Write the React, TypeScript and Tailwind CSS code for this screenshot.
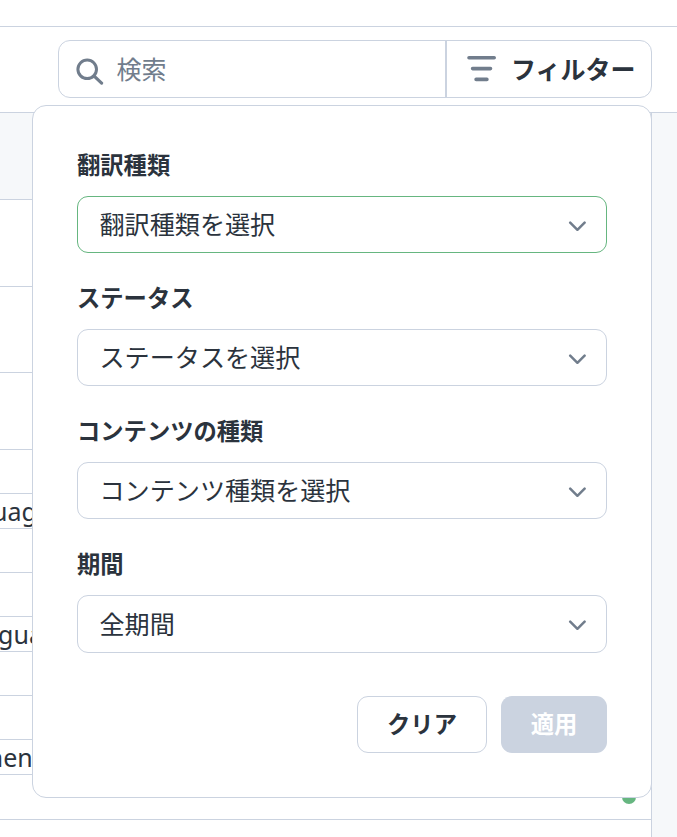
import { useState } from "react";
import clsx from "clsx";

const fields = [
  { id: "translation", label: "翻訳種類", value: "翻訳種類を選択" },
  { id: "status", label: "ステータス", value: "ステータスを選択" },
  { id: "content", label: "コンテンツの種類", value: "コンテンツ種類を選択" },
  { id: "period", label: "期間", value: "全期間" },
];

const rows = [
  { height: "h-[87px]", text: "", offset: "" },
  { height: "h-[86px]", text: "", offset: "" },
  { height: "h-[77px]", text: "", offset: "" },
  { height: "h-11", text: "", offset: "" },
  { height: "h-[35px]", text: "Language", offset: "-ml-[66px]" },
  { height: "h-11", text: "", offset: "" },
  { height: "h-11", text: "", offset: "" },
  { height: "h-[35px]", text: "Language", offset: "-ml-[44.5px]" },
  { height: "h-11", text: "", offset: "" },
  { height: "h-11", text: "", offset: "" },
  { height: "h-[35px]", text: "Document", offset: "-ml-[81px]" },
];

function SearchIcon() {
  return (
    <svg className="size-7 shrink-0" viewBox="0 0 28 28" fill="none" stroke="#717d8c">
      <circle cx="11.2" cy="12.3" r="9.3" strokeWidth="3" />
      <path d="M17.9 18.9l7.7 7.2" strokeWidth="3.2" strokeLinecap="round" />
    </svg>
  );
}

function FilterIcon() {
  return (
    <svg className="h-7 w-[30px] shrink-0" viewBox="0 0 30 28" stroke="#717d8c" strokeWidth="3.6" strokeLinecap="round">
      <path d="M2 2.8h25.2M5.6 13.6h17.9M9.1 24.4h10.8" />
    </svg>
  );
}

function ChevronIcon() {
  return (
    <svg className="mt-[3px] h-[11px] w-[18px]" viewBox="0 0 18 11" fill="none" stroke="#717d8c" strokeWidth="2.5" strokeLinecap="round" strokeLinejoin="round">
      <path d="M2.2 1.7L9.4 8.8l7.2-7.1" />
    </svg>
  );
}

export default function App() {
  const [active, setActive] = useState("translation");

  return (
    <div className="relative flex h-[837px] w-[677px] flex-col overflow-hidden bg-white font-['Noto_Sans','Noto_Sans_CJK_JP',sans-serif] text-[#2b333d]">
      {/* Toolbar */}
      <div className="h-[27px] shrink-0 border-b border-[#cbd3e0]" />
      <div className="h-[86px] shrink-0 border-b border-[#cbd3e0] pt-[13px] pl-[58px]">
        <div className="flex h-[58px] w-[594px] rounded-xl border border-[#cbd3e0]">
          <div className="flex flex-1 items-center gap-[12.5px] pt-[3px] pl-[17px]">
            <SearchIcon />
            <span className="-mt-[6px] font-['Noto_Sans_CJK_JP',sans-serif] text-[25px] leading-9 text-[#717d8c]">検索</span>
          </div>
          <button className="flex w-[206px] items-center border-l-2 border-[#cbd3e0] pl-5">
            <FilterIcon />
            <span className="-mt-0.5 ml-[14px] font-['Noto_Sans_CJK_JP',sans-serif] text-[25px] leading-9 font-bold">フィルター</span>
          </button>
        </div>
      </div>

      {/* Table */}
      <div className="flex flex-1 bg-[#f6f8fa]">
        <div className="flex w-[652px] flex-col border-r border-[#cbd3e0] bg-white">
          <div className="h-[87px] shrink-0 border-b border-[#cbd3e0] bg-[#f6f8fa]" />
          {rows.map((row, i) => (
            <div key={i} className={clsx("shrink-0 border-b border-[#cbd3e0] text-[25px] leading-[34px]", row.height)}>
              {row.text && <span className={clsx("block", row.offset)}>{row.text}</span>}
            </div>
          ))}
          <div className="flex h-[45px] shrink-0 justify-end border-b border-[#cbd3e0] pt-[15px] pr-[15px]">
            <span className="size-[14px] rounded-full bg-[#66b680]" />
          </div>
        </div>
      </div>

      {/* Filter popover */}
      <div className="absolute top-[105px] left-8 h-[693px] w-[620px] rounded-[14px] border border-[#cbd3e0] bg-white px-11 pt-[41px] font-['Noto_Sans_CJK_JP',sans-serif]">
        <div className="flex flex-col gap-[27px]">
          {fields.map((field) => (
            <div key={field.id} className="flex h-[106px] flex-col last:h-[107px]">
              <label className="h-[49px] shrink-0 text-[23.3px] leading-[34px] font-bold">{field.label}</label>
              <button
                onClick={() => setActive(field.id)}
                className={clsx(
                  "flex flex-1 items-center justify-between rounded-[11px] border pr-5 pl-[21.5px] text-[25.1px] leading-9",
                  active === field.id ? "border-[#66b680]" : "border-[#cbd3e0]"
                )}
              >
                <span className="-mt-[3px]">{field.value}</span>
                <ChevronIcon />
              </button>
            </div>
          ))}
        </div>

        <div className="mt-[43px] flex justify-end gap-[14px] text-[23.3px] leading-[34px] font-bold">
          <button className="h-[57px] w-[130px] rounded-[11px] border border-[#cbd3e0] pb-1">クリア</button>
          <button className="h-[57px] w-[106px] rounded-[11px] bg-[#cbd3e0] pb-1 text-white">適用</button>
        </div>
      </div>
    </div>
  );
}
